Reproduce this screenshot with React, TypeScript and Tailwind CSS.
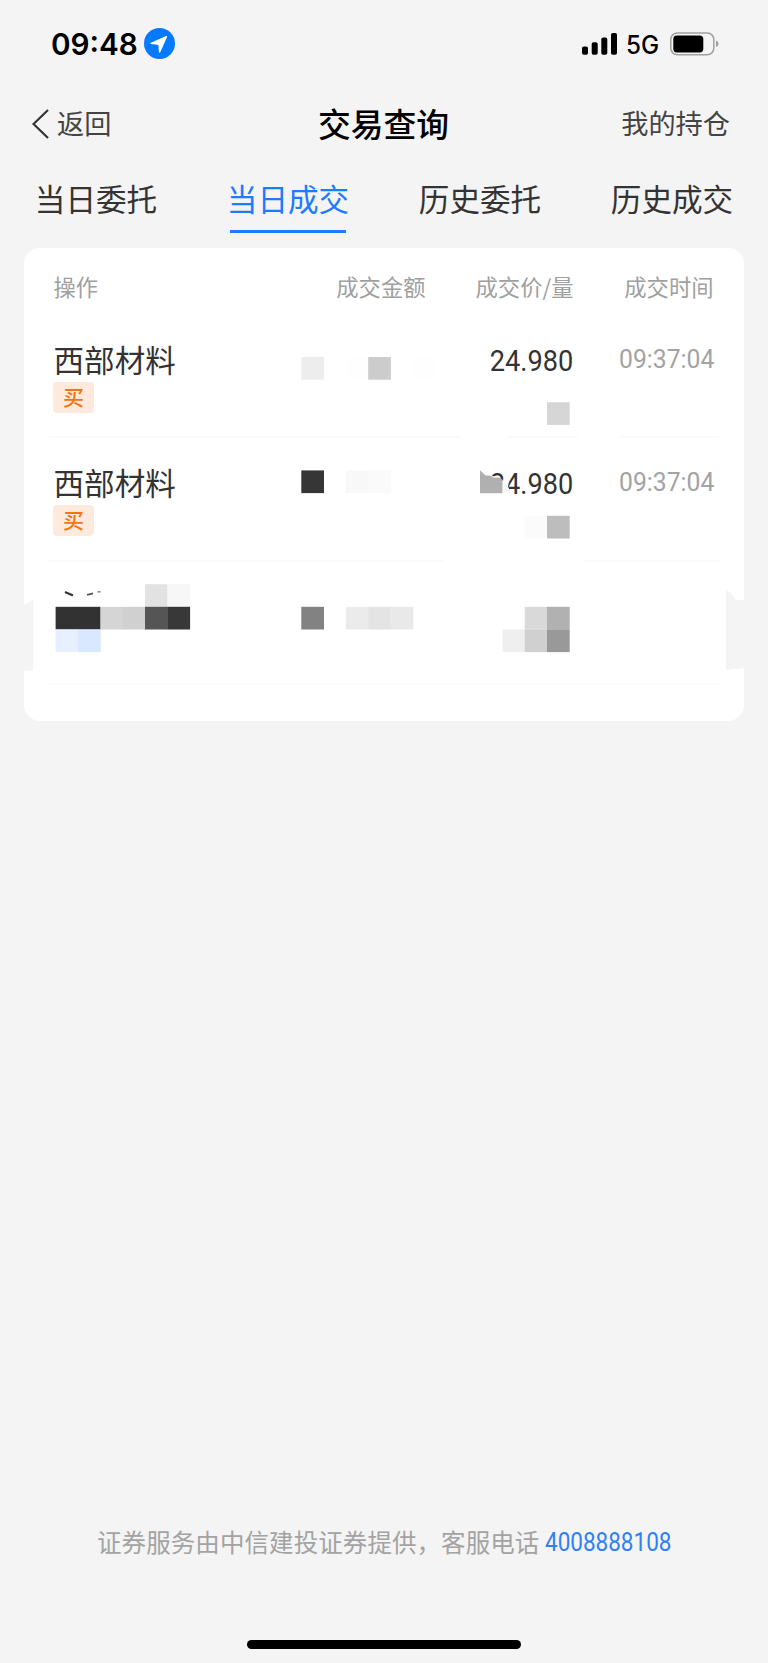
import React from 'react';

interface Trade {
  id: number;
  name: string;
  side: string;
  price: string;
  time: string;
}

interface Tile {
  x: number;
  y: number;
  fill: string;
}

const TABS = ['当日委托', '当日成交', '历史委托', '历史成交'];

const TRADES: Trade[] = [
  { id: 1, name: '西部材料', side: '买', price: '24.980', time: '09:37:04' },
  { id: 2, name: '西部材料', side: '买', price: '24.980', time: '09:37:04' },
];

// Privacy mosaic, every tile is TILE px square
const TILE = 22.4;
const TILES: Tile[] = [
  { x: 301.3, y: 357, fill: '#ededed' },
  { x: 346, y: 357, fill: '#fefefe' },
  { x: 368.2, y: 357, fill: '#cccccc' },
  { x: 413, y: 357, fill: '#fefefe' },
  { x: 547, y: 402.2, fill: '#d6d6d6' },
  { x: 301.3, y: 470.4, fill: '#363636' },
  { x: 345.8, y: 470.4, fill: '#f8f8f8' },
  { x: 368.2, y: 470.4, fill: '#fafafa' },
  { x: 524.7, y: 515.8, fill: '#fbfbfb' },
  { x: 547, y: 515.8, fill: '#bdbdbd' },
  { x: 145, y: 584.2, fill: '#e2e2e2' },
  { x: 167.4, y: 584.2, fill: '#f7f7f7' },
  { x: 55.6, y: 606.8, fill: '#323232' },
  { x: 78, y: 606.8, fill: '#323232' },
  { x: 100.4, y: 606.8, fill: '#d5d5d5' },
  { x: 122.6, y: 606.8, fill: '#d0d0d0' },
  { x: 145, y: 606.8, fill: '#555555' },
  { x: 167.4, y: 606.8, fill: '#383838' },
  { x: 301.3, y: 606.8, fill: '#828282' },
  { x: 345.8, y: 606.8, fill: '#ebebeb' },
  { x: 368.2, y: 606.8, fill: '#e4e4e4' },
  { x: 390.6, y: 606.8, fill: '#e9e9e9' },
  { x: 524.7, y: 606.8, fill: '#d9d9d9' },
  { x: 547, y: 606.8, fill: '#b1b1b1' },
  { x: 55.6, y: 629.4, fill: '#e6f0ff' },
  { x: 78, y: 629.4, fill: '#d9e8fe' },
  { x: 502.6, y: 629.4, fill: '#efefef' },
  { x: 524.7, y: 629.4, fill: '#d0d0d0' },
  { x: 547, y: 629.4, fill: '#999999' },
];

const StatusBar: React.FC = () => (
  <div className="flex h-[87px] items-center justify-between pl-[51px] pr-[49px] text-black">
    <div className="flex items-center">
      <span className="w-[92.5px] font-[Inter] text-[30px] leading-[36px] font-semibold">
        <span className="inline-block origin-left scale-x-[0.99]">09:48</span>
      </span>
      <svg className="size-[31px]" viewBox="0 0 31 31">
        <circle cx="15.5" cy="15.5" r="15.5" fill="#067aff" />
        <path
          d="M22.4 8.6L7.2 15.4L15 16.2L15.6 24Z"
          fill="#fff"
          stroke="#fff"
          strokeWidth="1.4"
          strokeLinejoin="round"
        />
      </svg>
    </div>
    <div className="flex items-center">
      <svg className="h-[24px] w-[36px]" viewBox="0 0 36 24">
        <rect x="0" y="14.4" width="6" height="8.4" rx="1.8" />
        <rect x="9.7" y="10.2" width="6" height="12.6" rx="1.8" />
        <rect x="19.3" y="5.6" width="6" height="17.2" rx="1.8" />
        <rect x="29" y="0.9" width="6" height="21.9" rx="1.8" />
      </svg>
      <span className="ml-2 w-[44px] font-[Inter] text-[25px] leading-[36px] font-medium">
        <span className="inline-block origin-left translate-y-[1px] scale-x-[0.97]">5G</span>
      </span>
      <svg className="h-[24px] w-[49px]" viewBox="0 0 49 24">
        <rect x="0.8" y="1" width="43" height="21.8" rx="6.5" fill="none" stroke="#a0a0a0" strokeWidth="1.5" />
        <rect x="3.3" y="3.4" width="30" height="17" rx="3.6" />
        <path d="M46 8.4C49.3 9.4 49.3 14 46 15Z" fill="#a0a0a0" />
      </svg>
    </div>
  </div>
);

const NavBar: React.FC = () => (
  <div className="grid h-[74px] grid-cols-3 items-center pr-[38px] pl-8 text-[27.2px] text-[#444]">
    <div className="flex items-center">
      <svg className="mr-[8px] h-[30px] w-[17px]" viewBox="0 0 17 30" fill="none">
        <path d="M16 1L1.5 15L16 29" stroke="#333" strokeWidth="2.2" />
      </svg>
      <span className="-mt-[3px]">返回</span>
    </div>
    <h1 className="-mt-[3px] pl-[5px] text-center text-[32.8px] font-medium whitespace-nowrap text-black">交易查询</h1>
    <div className="-mt-[3px] text-right">我的持仓</div>
  </div>
);

const TradeRow: React.FC<{ trade: Trade }> = ({ trade }) => (
  <div className="mx-[25px] flex h-[123.3px] border-b-2 border-[#fafafa] pl-[4.5px]">
    <div className="w-[300px] pt-[22px]">
      <div className="text-[30.6px] leading-[44px] text-[#333]">{trade.name}</div>
      <div className="mt-[1px] -ml-[0.5px] flex h-[31px] w-[41px] items-center justify-center rounded-[4px] bg-[#fdeadd] pb-[2px] text-[21px] leading-none font-medium text-[#f27413]">
        {trade.side}
      </div>
    </div>
    <div className="w-[220px] pt-[26px] text-right font-[Roboto] text-[30px] leading-[40px] text-[#333]">
      <span className="inline-block origin-right scale-x-[0.905]">{trade.price}</span>
    </div>
    <div className="w-[141px] pt-[24px] text-right font-[Roboto] text-[26px] leading-[40px] text-[#a3a3a3]">
      <span className="inline-block origin-right scale-x-[0.95]">{trade.time}</span>
    </div>
  </div>
);

const Mosaic: React.FC = () => (
  <svg className="absolute inset-0 size-full" viewBox="24 248 720 473">
    {/* gaps wiped out of the separators */}
    <g fill="#fff">
      <rect x="460" y="435" width="48" height="6" />
      <rect x="578" y="435" width="43" height="6" />
      <rect x="443" y="558" width="140" height="6" />
    </g>
    {/* first digit of the second price */}
    <path d="M480 476H491Q498 476 503 481L509.5 477L508 487L512 494V500H480Z" fill="#fff" />
    <path d="M480 470.2L485.6 475.4H490.5Q493 478.4 497 477.6Q500.5 477.4 502.6 480V493.2H480Z" fill="#b0b0b0" />
    <path d="M502.6 481L507 485L511 493.2H502.6Z" fill="#f8f8f8" />
    {TILES.map((tile) => (
      <rect key={`${tile.x}-${tile.y}`} x={tile.x} y={tile.y} width={TILE + 0.3} height={TILE + 0.3} fill={tile.fill} />
    ))}
    {/* leftovers of the hidden name */}
    <path d="M65 592L73 595.4" stroke="#333" strokeWidth="2.2" />
    <path d="M87 594.8L93 593.4" stroke="#555" strokeWidth="1.8" />
    <path d="M97.5 591.8H100.5" stroke="#888" strokeWidth="1.6" />
    {/* bitten card edges */}
    <path d="M23 606L33.3 599V670.8H23Z" fill="#f4f4f4" />
    <path d="M726 590C730 591.5 733 595 735.5 600H745V668L726 670Z" fill="#f4f4f4" />
  </svg>
);

const App: React.FC = () => {
  const activeTab = 1;

  return (
    <div className="flex h-[1663px] w-[768px] flex-col overflow-hidden bg-[#f4f4f4] font-['Noto_Sans_CJK_SC',sans-serif]">
      <StatusBar />
      <NavBar />

      <div className="grid h-[87px] grid-cols-4">
        {TABS.map((tab, index) => (
          <div
            key={tab}
            className={`flex flex-col items-center pt-[15px] text-[30.6px] leading-[44px] ${
              index === activeTab ? 'text-[#1c7bff]' : 'text-[#333]'
            }`}
          >
            <span>{tab}</span>
            {index === activeTab && <span className="mt-[10px] h-[3px] w-[116px] bg-[#1c7bff]" />}
          </div>
        ))}
      </div>

      <div className="relative mx-6 h-[473px] rounded-2xl bg-white">
        <div className="flex h-[67px] pl-[29.5px] text-[22.3px] leading-[77px] text-[#a0a0a0]">
          <div className="w-[160px]">操作</div>
          <div className="w-[212px] text-right">成交金额</div>
          <div className="w-[148px] text-right">成交价/量</div>
          <div className="w-[140px] text-right">成交时间</div>
        </div>
        {TRADES.map((trade) => (
          <TradeRow key={trade.id} trade={trade} />
        ))}
        <div className="mx-[25px] h-[123.3px] border-b-2 border-[#fafafa]" />
        <Mosaic />
      </div>

      <div className="mt-auto flex h-[36px] items-center pl-[97px] text-[24.5px] leading-[36px] whitespace-nowrap text-[#a3a3a3]">
        <span className="-mt-[3px] w-[442px] tracking-[0.08px]">证券服务由中信建投证券提供，客服电话</span>
        <a className="ml-[6px] inline-block origin-left scale-x-[0.9] font-[Roboto] text-[25px] text-[#2f80f7]">4008888108</a>
      </div>
      <div className="mx-auto mt-[79px] mb-[14px] h-[9px] w-[274px] shrink-0 rounded-full bg-black" />
    </div>
  );
};

export default App;
